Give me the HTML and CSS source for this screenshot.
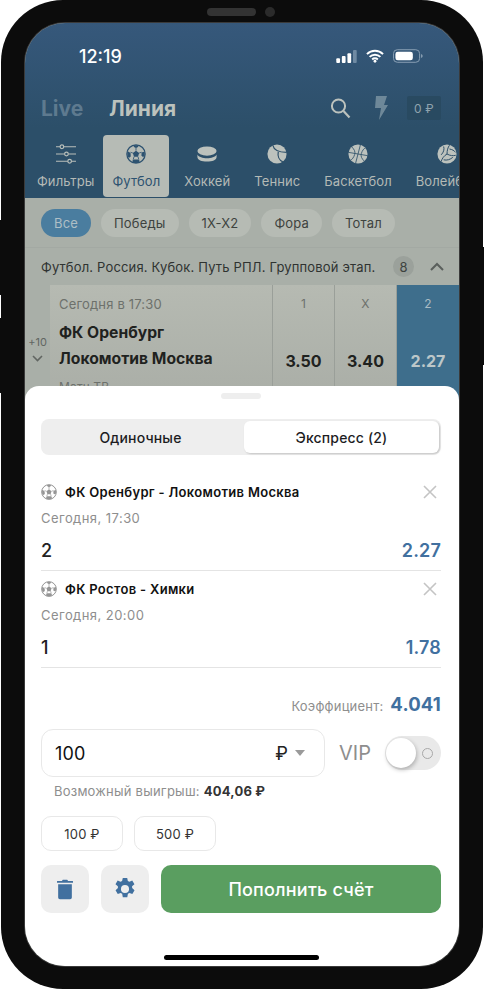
FILE: index.html
```html
<!DOCTYPE html>
<html lang="ru">
<head>
<meta charset="utf-8">
<title>Купон</title>
<link rel="stylesheet" href="styles.css">
</head>
<body>
<svg class="defs" width="0" height="0" aria-hidden="true">
  <symbol id="ball" viewBox="0 0 24 24">
    <circle cx="12" cy="12" r="11" fill="none" stroke="currentColor" stroke-width="1.500"/>
    <path fill="currentColor" d="M12 8l3.800 2.800-1.400 4.500H9.600L8.200 10.800zM9 1.500h6l-.5 2L12 4.700 9.500 3.500zM22.500 9l-.1 5.500-2 1-1.900-1.400.2-3.900zM1.500 9l1.800.2 2.200 1.900.2 3.900-1.900 1.400-2-1zM9 18.500h6l1.500 2-1 2.300H8.500l-1-2.300z"/>
    <path fill="none" stroke="currentColor" stroke-width="1" d="M12 4.500V8M8.200 10.800l-2.900-.9M15.800 10.800l2.900-.9M9.600 15.300l-1 3.400M14.400 15.300l1 3.400"/>
  </symbol>
</svg>
<div class="phone">
  <i class="side side-l1"></i><i class="side side-l2"></i><i class="side side-r"></i>
  <div class="notch"><span class="speaker"></span><span class="camera"></span></div>
  <div class="screen">
    <header class="top">
      <div class="status">
        <span class="time">12:19</span>
        <span class="status-icons">
          <svg width="21" height="13" viewBox="0 0 22 14"><rect x="0" y="9" width="4" height="5" rx="1" fill="#fff"/><rect x="6" y="6.500" width="4" height="7.500" rx="1" fill="#fff"/><rect x="12" y="3.500" width="4" height="10.500" rx="1" fill="#fff"/><rect x="18" y="0" width="4" height="14" rx="1" fill="#6f8aa3"/></svg>
          <svg width="18" height="14" viewBox="0 0 19 14"><path fill="none" stroke="#fff" stroke-width="2" d="M1 5a12 12 0 0 1 17 0M3.800 8a8 8 0 0 1 11.400 0M6.500 10.700a4.200 4.200 0 0 1 6 0"/><circle cx="9.500" cy="12.500" r="1.500" fill="#fff"/></svg>
          <svg width="30" height="14" viewBox="0 0 31 14"><rect x=".5" y=".5" width="27" height="13" rx="4" fill="none" stroke="#8ba1b5"/><rect x="2.500" y="2.500" width="18" height="9" rx="2.500" fill="#fff"/><path d="M29 5l1.500 1v2L29 9z" fill="#8ba1b5"/></svg>
        </span>
      </div>
      <div class="head">
        <span class="head-live">Live</span>
        <span class="head-line">Линия</span>
        <span class="head-right">
          <svg class="search" width="21" height="22" viewBox="0 0 21 22"><circle cx="8.500" cy="9" r="6.600" fill="none" stroke="#bcc2bd" stroke-width="2"/><path d="M13.500 14l6 6.500" stroke="#bcc2bd" stroke-width="2.200"/></svg>
          <svg class="bolt" width="14" height="24" viewBox="0 0 14 24"><path fill="#6e8899" d="M2 0h11l-3 9h4L5 24l2-12H1z"/></svg>
          <span class="balance">0 ₽</span>
        </span>
      </div>
      <nav class="tabs">
        <div class="tab tab-filter">
          <svg class="tab-ico" viewBox="0 0 24 22" fill="none" stroke="#b9bfba" stroke-width="1.300"><path d="M1 3h4.500M9.500 3H23M1 11h9.500M14.500 11H23M1 19h13M18 19h5"/><circle cx="7.500" cy="3" r="2"/><circle cx="12.500" cy="11" r="2"/><circle cx="16" cy="19" r="2"/></svg>
          <span>Фильтры</span>
        </div>
        <div class="tab tab-on">
          <svg class="tab-ico tab-ball"><use href="#ball"/></svg>
          <span>Футбол</span>
        </div>
        <div class="tab">
          <svg class="tab-ico" viewBox="0 0 24 24" fill="#bcc2bd"><ellipse cx="12" cy="8.500" rx="11.500" ry="5.500"/><path d="M.5 12.500c1.500 3 6.500 4.500 11.500 4.500s10-1.500 11.500-4.500V15.500c0 3.500-5 5.500-11.500 5.500S.5 19 .5 15.500z"/></svg>
          <span>Хоккей</span>
        </div>
        <div class="tab">
          <svg class="tab-ico" viewBox="0 0 24 24"><circle cx="12" cy="12" r="11.500" fill="#bcc2bd"/><path fill="none" stroke="#2e5069" stroke-width="1.500" d="M7 1.500c1 5 7 8.500 16.500 8.500M13.500 9.500c-1 5 1 10 5.500 12"/></svg>
          <span>Теннис</span>
        </div>
        <div class="tab">
          <svg class="tab-ico" viewBox="0 0 24 24"><circle cx="12" cy="12" r="11.500" fill="#bcc2bd"/><path fill="none" stroke="#2e5069" stroke-width="1" d="M15 .5L9 23.500M.5 10l23 4M4.500 3.500c3 3 4.500 5.500 3.500 9s-3 6-5 7M19.500 20.500c-3-3-4.500-5.500-3.500-9s3-6 5-7"/></svg>
          <span>Баскетбол</span>
        </div>
        <div class="tab">
          <svg class="tab-ico" viewBox="0 0 24 24"><circle cx="12" cy="12" r="11.500" fill="#bcc2bd"/><path fill="none" stroke="#2e5069" stroke-width="1.200" d="M12 12c0-4 1-8 3-10.500M12 12c3.500 2 7.500 2.500 10.500 1.500M12 12c-3.500 2-6 5.500-7 9M8 3c1 3.500 0 7-3 10M15 6c3 .5 6 2 7 4M8 19c4 1 8-.5 11-3"/></svg>
          <span>Волейбол</span>
        </div>
      </nav>
    </header>
    <main class="list">
      <div class="chips">
        <span class="chip chip-on">Все</span>
        <span class="chip">Победы</span>
        <span class="chip">1X-X2</span>
        <span class="chip">Фора</span>
        <span class="chip">Тотал</span>
      </div>
      <div class="league">
        <span class="league-name">Футбол. Россия. Кубок. Путь РПЛ. Групповой этап.</span>
        <span class="league-count">8</span>
        <svg class="league-arrow" width="14" height="9" viewBox="0 0 14 9"><path d="M1 8l6-6 6 6" fill="none" stroke="#5a5f5c" stroke-width="2"/></svg>
      </div>
      <div class="match">
        <div class="more">
          <span>+10</span>
          <svg width="11" height="7" viewBox="0 0 11 7"><path d="M1 1l4.500 4.500L10 1" fill="none" stroke="#616662" stroke-width="1.600"/></svg>
        </div>
        <div class="info">
          <div class="info-time">Сегодня в 17:30</div>
          <div class="team team-a">ФК Оренбург</div>
          <div class="team">Локомотив Москва</div>
          <div class="info-tv">Матч ТВ</div>
        </div>
        <div class="odd"><span class="odd-label">1</span><span class="odd-val">3.50</span></div>
        <div class="odd"><span class="odd-label">X</span><span class="odd-val">3.40</span></div>
        <div class="odd odd-on"><span class="odd-label">2</span><span class="odd-val">2.27</span></div>
      </div>
    </main>
    <section class="sheet">
      <div class="handle"></div>
      <div class="segment">
        <span class="seg">Одиночные</span>
        <span class="seg seg-on">Экспресс (2)</span>
      </div>
      <div class="bet bet-first">
        <div class="bet-title">
          <svg class="bet-ball" width="16" height="16"><use href="#ball"/></svg>
          <span class="bet-name">ФК Оренбург - Локомотив Москва</span>
          <svg class="bet-x" width="14" height="14" viewBox="0 0 14 14"><path d="M1 1l12 12M13 1L1 13" stroke="#c4c4c4" stroke-width="1.600"/></svg>
        </div>
        <div class="bet-date">Сегодня, 17:30</div>
        <div class="bet-row"><span class="bet-out">2</span><span class="bet-odd">2.27</span></div>
      </div>
      <div class="bet">
        <div class="bet-title">
          <svg class="bet-ball" width="16" height="16"><use href="#ball"/></svg>
          <span class="bet-name">ФК Ростов - Химки</span>
          <svg class="bet-x" width="14" height="14" viewBox="0 0 14 14"><path d="M1 1l12 12M13 1L1 13" stroke="#c4c4c4" stroke-width="1.600"/></svg>
        </div>
        <div class="bet-date">Сегодня, 20:00</div>
        <div class="bet-row"><span class="bet-out">1</span><span class="bet-odd">1.78</span></div>
      </div>
      <div class="total">
        <span class="total-label">Коэффициент:</span>
        <span class="total-val">4.041</span>
      </div>
      <div class="stake">
        <div class="stake-input">
          <span class="stake-num">100</span>
          <span class="stake-cur">₽</span>
          <i class="stake-caret"></i>
        </div>
        <span class="vip">VIP</span>
        <div class="toggle"><i class="knob"></i><i class="toggle-o"></i></div>
      </div>
      <div class="win">Возможный выигрыш: <b>404,06 ₽</b></div>
      <div class="quick">
        <span class="quick-btn">100 ₽</span>
        <span class="quick-btn">500 ₽</span>
      </div>
      <div class="actions">
        <button class="icon-btn" type="button">
          <svg width="16" height="21" viewBox="0 0 18 22"><path fill="#41709f" d="M6.500 0h5l1 1.300H17.500a.5.500 0 0 1 .5.500V3.500H0V1.800a.5.500 0 0 1 .5-.5h5zM1.300 5h15.400v15a2 2 0 0 1-2 2H3.300a2 2 0 0 1-2-2z"/></svg>
        </button>
        <button class="icon-btn" type="button">
          <svg width="22" height="22" viewBox="0 0 24 24"><path fill="#41709f" fill-rule="evenodd" d="M9.600 0h4.800l.7 3.400 1.700.8 3.100-1.500 2.400 4.100-2.600 2.300.1 1.900 2.600 2.300-2.400 4.100-3.100-1.100-1.700 1-.7 3.700H9.600l-.7-3.700-1.700-1-3.100 1.100-2.400-4.100 2.600-2.300-.1-1.900-2.600-2.300 2.400-4.100 3.100 1.500 1.700-.8zM12 7.600a4.400 4.400 0 1 0 0 8.800 4.400 4.400 0 0 0 0-8.800z"/></svg>
        </button>
        <button class="cta" type="button">Пополнить счёт</button>
      </div>
      <div class="home"></div>
    </section>
  </div>
</div>
</body>
</html>
```

FILE: styles.css
```css
* { box-sizing: border-box; }
html, body { margin: 0; padding: 0; background: #fff; }
body { width: 484px; height: 989px; overflow: hidden; font-family: Inter, "Liberation Sans", sans-serif; letter-spacing: .17px; }
.defs { position: absolute; }

.phone {
  position: relative;
  width: 482px;
  height: 989px;
  margin-left: 1px;
  padding: 23px 24px;
  background: #0c0c0c;
  border-radius: 62px;
}
.side { position: absolute; width: 1px; background: #0c0c0c; }
.side-l1 { left: -1px; top: 220px; height: 75px; }
.side-l2 { left: -1px; top: 318px; height: 75px; }
.side-r { right: -1px; top: 247px; height: 118px; }
.notch { position: absolute; left: 206px; top: 7px; display: flex; align-items: center; gap: 9px; }
.speaker { width: 49px; height: 8px; border-radius: 4px; background: #333; }
.camera { width: 10px; height: 10px; border-radius: 50%; background: #2b2b2b; }

.screen {
  position: relative;
  width: 434px;
  height: 943px;
  overflow: hidden;
  border-radius: 40px;
  background: #a9afa8;
  box-shadow: 0 0 0 1px #3a3a3a;
}

.top { height: 175px; padding-top: 22px; background: linear-gradient(#36587b, #2c4f69 60%); }
.status { display: flex; align-items: center; justify-content: space-between; height: 22px; padding: 0 36px 0 54px; }
.time { color: #fff; font-size: 18px; font-weight: 500; letter-spacing: 0; }
.status-icons { display: flex; align-items: center; gap: 9px; }

.head { display: flex; align-items: center; height: 30px; margin-top: 26px; padding: 0 18px 0 16px; }
.head-live { width: 68px; font-size: 21px; font-weight: 700; color: #5e7a8f; letter-spacing: 0; }
.head-line { font-size: 21px; font-weight: 700; color: #bcc2bd; letter-spacing: 0; }
.head-right { display: flex; align-items: center; margin-left: auto; }
.search { margin-right: 23px; }
.bolt { margin-right: 19px; }
.balance { width: 34px; height: 24px; display: flex; align-items: center; justify-content: center; background: #294a61; color: #8fa3ae; font-size: 12px; border-radius: 2px; }

.tabs { display: flex; gap: 6px; height: 62px; margin-top: 12px; padding-left: 3px; overflow: hidden; }
.tab { flex: none; display: flex; flex-direction: column; align-items: center; padding: 9px 9px 0; color: #b4bab6; font-size: 13px; letter-spacing: .1px; border-radius: 4px; }
.tab span { margin-top: 9px; line-height: 16px; }
.tab-ico { display: block; width: 20px; height: 20px; flex: none; }
.tab-filter { padding-right: 4px; margin-right: -1px; }
.tab-filter .tab-ico { width: 22px; }
.tab-on { background: #b6bbb5; color: #2d5270; }
.tab-ball { color: #2d5270; }

.list { padding: 11px 0 0; }
.chips { display: flex; gap: 10px; padding: 0 16px; }
.chip { height: 28px; padding: 0 13px; display: flex; align-items: center; border-radius: 14px; background: #b6bbb4; color: #3e4340; font-size: 13px; }
.chip-on { background: #4a7d9f; color: #aebfc6; }
.league { display: flex; align-items: center; height: 38px; margin-top: 10px; padding: 0 15px 0 16px; border-top: 1px solid #a3a9a3; }
.league-name { flex: 1; color: #2f3331; font-size: 13px; white-space: nowrap; }
.league-count { width: 21px; height: 21px; border-radius: 50%; background: #9ba19b; color: #3e4340; font-size: 13px; display: flex; align-items: center; justify-content: center; margin-right: 16px; }

.match { display: flex; height: 130px; }
.more { width: 25px; padding-top: 49px; display: flex; flex-direction: column; align-items: center; color: #616662; font-size: 11px; letter-spacing: 0; }
.more span { line-height: 16px; }
.more svg { margin-top: 5px; }
.info { width: 223px; padding: 10px 0 0 9px; background: linear-gradient(#b6bab2, #a8aca5); border-right: 1px solid #9a9f99; }
.info-time { color: #6d716c; font-size: 13px; line-height: 18px; }
.team { color: #1f2220; font-size: 15.700px; font-weight: 700; line-height: 26px; white-space: nowrap; letter-spacing: 0; }
.team-a { margin-top: 7px; }
.info-tv { margin-top: 7px; color: #6d716c; font-size: 12px; line-height: 16px; }
.odd { width: 62px; padding-top: 10px; display: flex; flex-direction: column; align-items: center; background: linear-gradient(#b6bab2, #a8aca5); border-right: 1px solid #9a9f99; }
.odd-label { color: #6d716c; font-size: 12px; line-height: 18px; }
.odd-val { margin-top: 37px; color: #1f2220; font-size: 16px; font-weight: 700; line-height: 22px; letter-spacing: 0; }
.odd-on { background: #3e6e8c; border: 0; }
.odd-on .odd-label { color: #a9bbc4; }
.odd-on .odd-val { color: #bcc7c9; }

.sheet { position: absolute; left: 0; right: 0; bottom: 0; height: 580px; padding: 7px 18px 0 16px; background: #fff; border-radius: 14px 14px 0 0; }
.handle { width: 40px; height: 6px; margin: 0 auto; border-radius: 3px; background: #eeeeee; }
.segment { display: flex; gap: 6px; height: 36px; margin-top: 20px; padding: 2px; background: #eeeeee; border-radius: 8px; }
.seg { flex: none; width: 195px; display: flex; align-items: center; justify-content: center; color: #1d1d1f; font-size: 14px; font-weight: 500; }
.seg-on { background: #fff; border-radius: 6px; box-shadow: 1px 1px 2px rgba(0,0,0,.18); }

.bet { padding: 8px 0 7px; border-bottom: 1px solid #e4e4e4; }
.bet-first { padding-top: 27px; }
.bet-title { display: flex; align-items: center; height: 20px; }
.bet-ball { color: #959595; margin-right: 8px; flex: none; }
.bet-name { flex: 1; color: #111; font-size: 13px; font-weight: 600; white-space: nowrap; letter-spacing: .32px; }
.bet-x { margin-right: 4px; }
.bet-date { margin-top: 8px; color: #8e8e8e; font-size: 13px; line-height: 16px; letter-spacing: .45px; }
.bet-row { display: flex; justify-content: space-between; align-items: center; margin-top: 13px; line-height: 24px; }
.bet-out { color: #222; font-size: 18px; font-weight: 500; }
.bet-odd { color: #41709f; font-size: 18px; font-weight: 600; }

.total { display: flex; justify-content: flex-end; align-items: baseline; gap: 7px; margin-top: 25px; height: 24px; }
.total-label { color: #8e8e8e; font-size: 13px; letter-spacing: .2px; }
.total-val { color: #41709f; font-size: 18.500px; font-weight: 700; }

.stake { display: flex; align-items: center; margin-top: 12px; }
.stake-input { width: 284px; height: 48px; padding: 0 19px 0 13px; display: flex; align-items: center; border: 1px solid #e8e8e8; border-radius: 12px; }
.stake-num { flex: 1; color: #111; font-size: 18px; font-weight: 400; }
.stake-cur { color: #222; font-size: 18px; }
.stake-caret { width: 0; height: 0; margin-left: 7px; border: 5.500px solid transparent; border-top: 6px solid #9a9a9a; border-bottom: 0; }
.vip { margin-left: 14px; width: 46px; color: #8e8e8e; font-size: 20px; letter-spacing: 0; }
.toggle { position: relative; width: 56px; height: 34px; border-radius: 17px; background: #e9e9e9; }
.knob { position: absolute; left: 1px; top: 2px; width: 30px; height: 30px; border-radius: 50%; background: #fff; box-shadow: 1px 2px 4px rgba(0,0,0,.25); }
.toggle-o { position: absolute; right: 8px; top: 12px; width: 11px; height: 11px; border-radius: 50%; border: 1px solid #a8a8a8; }

.win { margin: 6px 0 0 13px; color: #8e8e8e; font-size: 13px; line-height: 16px; letter-spacing: .22px; }
.win b { color: #333; font-weight: 700; }

.quick { display: flex; gap: 11px; margin-top: 17px; }
.quick-btn { width: 82px; height: 35px; display: flex; align-items: center; justify-content: center; border: 1px solid #e8e8e8; border-radius: 10px; color: #333; font-size: 13px; }

.actions { display: flex; gap: 12px; margin-top: 14px; }
.icon-btn { width: 48px; height: 48px; padding: 0; display: flex; align-items: center; justify-content: center; background: #eeeeee; border: 0; border-radius: 10px; }
.cta { flex: 1; height: 48px; background: #5a9e60; border: 0; border-radius: 10px; color: #fff; font: 500 18px Inter, "Liberation Sans", sans-serif; letter-spacing: .2px; }

.home { position: absolute; left: 139px; bottom: 6px; width: 155px; height: 5px; border-radius: 3px; background: #000; }
```
